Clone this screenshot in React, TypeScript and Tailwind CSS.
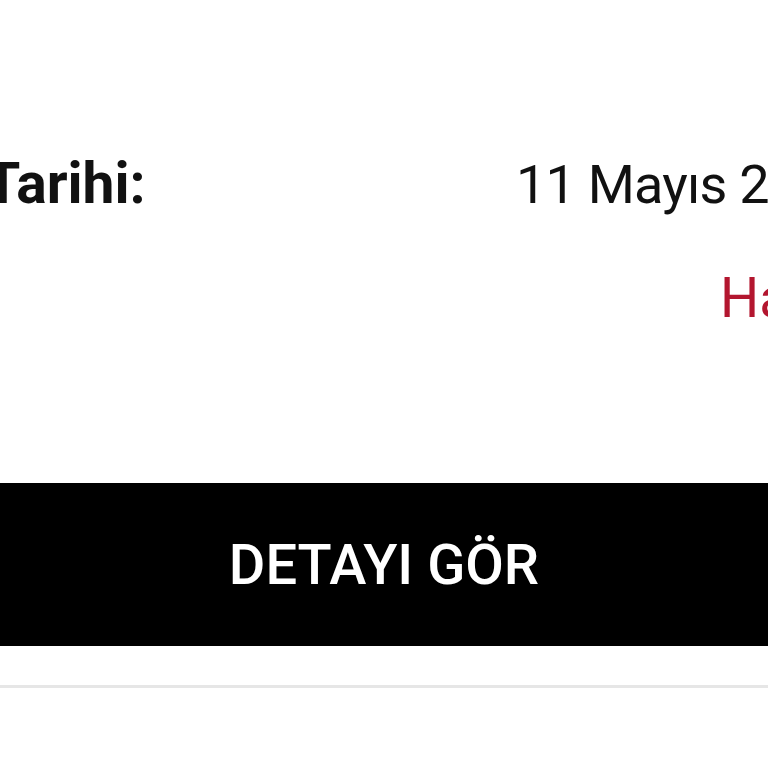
export default function App() {
  return (
    <div className="h-[768px] w-[768px] overflow-hidden bg-white font-['Roboto','Liberation_Sans',sans-serif]">
      <div className="flex h-[57px] mt-[155px] items-baseline whitespace-nowrap leading-none">
        <div className="-ml-[15px] w-[531px] shrink-0 text-[57px] font-bold text-[#111]">Tarihi:</div>
        <div className="text-[54px] tracking-[-0.8px] text-[#111]">11 Mayıs 2025</div>
      </div>

      <div className="mt-[59px] h-[56px] pl-[720px] whitespace-nowrap text-[55px] leading-none text-[#b3162f]">
        Hazırlanıyor
      </div>

      <button className="mt-[156px] flex h-[163px] w-full items-center justify-center bg-black text-[56px] font-medium leading-none text-white">
        DETAYI GÖR
      </button>

      <div className="mt-[39px] h-[3px] w-full bg-[#e6e6e6]" />
    </div>
  )
}
